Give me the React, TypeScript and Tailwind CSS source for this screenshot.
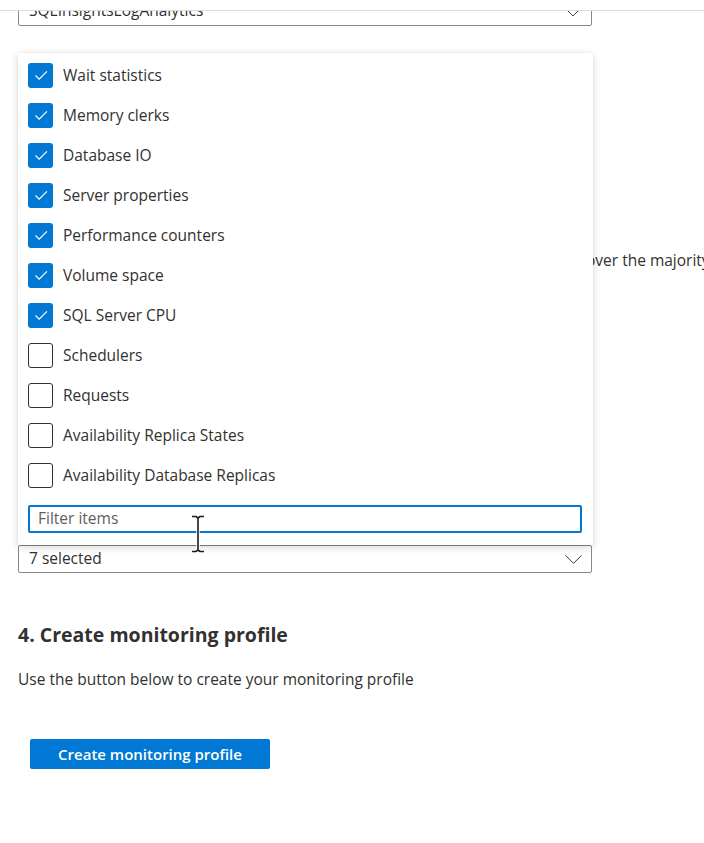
import { ChevronDown } from "lucide-react";

const metrics = [
	{ name: "Wait statistics", checked: true },
	{ name: "Memory clerks", checked: true },
	{ name: "Database IO", checked: true },
	{ name: "Server properties", checked: true },
	{ name: "Performance counters", checked: true },
	{ name: "Volume space", checked: true },
	{ name: "SQL Server CPU", checked: true },
	{ name: "Schedulers", checked: false },
	{ name: "Requests", checked: false },
	{ name: "Availability Replica States", checked: false },
	{ name: "Availability Database Replicas", checked: false },
];

function Checkbox({ checked }: { checked: boolean }) {
	if (!checked) {
		return <span className="h-[25px] w-[25px] shrink-0 rounded-[3px] border border-[#323130] bg-white" />;
	}
	return (
		<span className="flex h-[25px] w-[25px] shrink-0 items-center justify-center rounded-[3px] bg-[#0078d4]">
			<svg viewBox="0 0 24 24" className="h-[22px] w-[22px]" fill="none" stroke="white" strokeWidth="1.3">
				<path d="M6 12.5l4 4L18.5 8" />
			</svg>
		</span>
	);
}

function TextCursor() {
	return (
		<svg viewBox="0 0 16 38" className="pointer-events-none absolute left-[162px] top-[10px] h-[38px] w-[16px]">
			<path d="M2 1.5h4l2 1.5 2-1.5h4M8 3v32M2 36.5h4l2-1.5 2 1.5h4" fill="none" stroke="white" strokeWidth="3.5" />
			<path d="M2 1.5h4l2 1.5 2-1.5h4M8 3v32M2 36.5h4l2-1.5 2 1.5h4" fill="none" stroke="#1b1b1b" strokeWidth="1.6" />
		</svg>
	);
}

export default function App() {
	return (
		<div
			className="relative h-[843px] w-[704px] overflow-hidden bg-white text-[15.5px] text-[#323130]"
			style={{ fontFamily: '"Open Sans", "Noto Sans", sans-serif' }}
		>
			{/* sticky header edge */}
			<div className="absolute inset-x-0 top-0 z-20 h-[11px] border-b border-[#dcdcdc] bg-white" />

			<div className="px-[18px]">
				<div className="mt-[-4px] flex h-[30px] w-[574px] items-center justify-between rounded-[2px] border border-[#8a8886] pl-[10px] pr-[6px]">
					<span className="leading-none">SQLInsightsLogAnalytics</span>
					<ChevronDown className="mt-[4px] h-[24px] w-[24px] text-[#323130]" strokeWidth={0.9} />
				</div>

				<p className="mt-[224px] whitespace-nowrap pl-[568px] leading-5">over the majority of monitoring scenarios</p>

				<div className="relative mt-[275px] w-[574px]">
					<div className="absolute bottom-full left-0 z-10 w-[575px] rounded-[2px] bg-white pb-[12px] pl-[10px] pr-[11px] pt-[2px] shadow-[0_2px_8px_rgba(0,0,0,0.16),0_0_2px_rgba(0,0,0,0.08)]">
						<ul>
							{metrics.map((m) => (
								<li key={m.name} className="flex h-10 items-center gap-[10px]">
									<Checkbox checked={m.checked} />
									<span className="pt-[2px]">{m.name}</span>
								</li>
							))}
						</ul>
						<div className="relative mt-[10px]">
							<div className="flex h-[28px] items-center rounded-[2px] border-2 border-[#0078d4] px-[8px] text-[#605e5c]">
								Filter items
							</div>
							<TextCursor />
						</div>
					</div>
					<div className="flex h-[28px] items-center justify-between rounded-[2px] border border-[#8a8886] pl-[10px] pr-[2px]">
						<span>7 selected</span>
						<ChevronDown className="h-[31px] w-[31px] text-[#323130]" strokeWidth={0.75} />
					</div>
				</div>

				<h2 className="mt-[48px] text-[19.5px] font-bold leading-7">4. Create monitoring profile</h2>
				<p className="mt-[20px] leading-5">Use the button below to create your monitoring profile</p>

				<button className="ml-[12px] mt-[50px] flex h-[30px] w-[240px] items-center justify-center rounded-[2px] bg-[#0078d4] text-[15px] font-semibold text-white">
					Create monitoring profile
				</button>
			</div>
		</div>
	);
}
